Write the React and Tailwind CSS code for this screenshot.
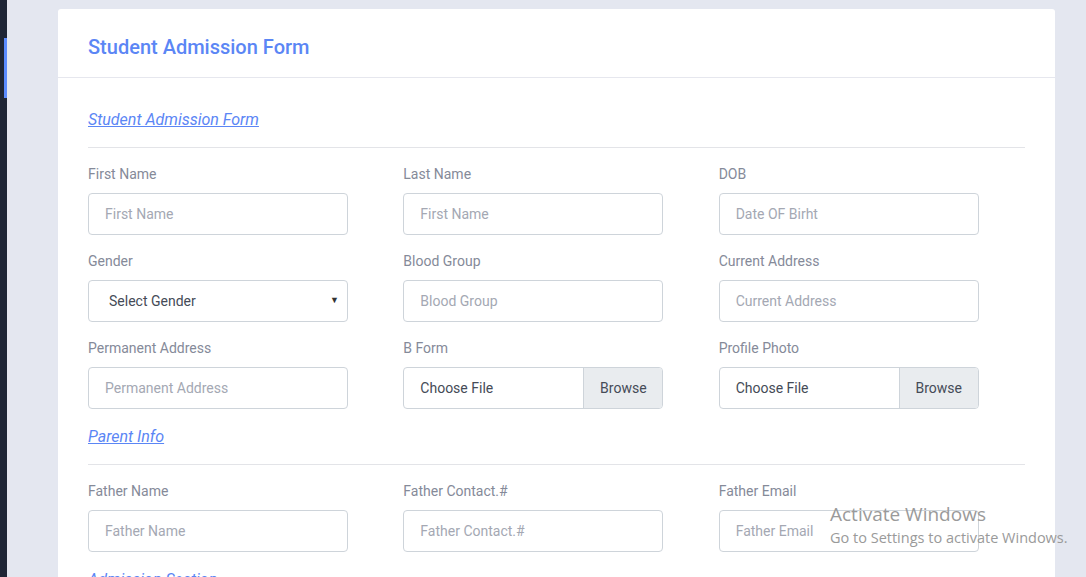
import React from "react";

const Label = ({ children }) => (
  <div className="h-5 text-[14px] leading-5 text-[#858a99] mb-[9px]">{children}</div>
);

const TextInput = ({ placeholder }) => (
  <div className="w-[260px] h-[42px] border border-[#ced4da] rounded-[4px] bg-white flex items-center px-4 text-[14px] text-[#a4a8b3]">
    {placeholder}
  </div>
);

const SelectInput = ({ value }) => (
  <div className="w-[260px] h-[42px] border border-[#ced4da] rounded-[4px] bg-white flex items-center justify-between pl-5 pr-[8px] text-[14px] text-[#454b57]">
    <span>{value}</span>
    <span className="text-[9px] text-[#333]">▼</span>
  </div>
);

const FileInput = () => (
  <div className="w-[260px] h-[42px] border border-[#ced4da] rounded-[4px] bg-white flex overflow-hidden text-[14px] text-[#454b57]">
    <div className="flex-1 flex items-center px-4">Choose File</div>
    <div className="w-[79px] bg-[#e9ecef] border-l border-[#ced4da] flex items-center justify-center">Browse</div>
  </div>
);

const Field = ({ label, children }) => (
  <div>
    <Label>{label}</Label>
    {children}
  </div>
);

const SectionLink = ({ children }) => (
  <div className="h-6 leading-6 text-[16px] italic underline text-[#5b86f5]">{children}</div>
);

export default function App() {
  return (
    <div className="w-[1086px] h-[577px] overflow-hidden bg-[#e4e7f0] flex relative" style={{ fontFamily: "Roboto, 'Liberation Sans', sans-serif" }}>
      <div className="w-[7px] h-full bg-[#1f2636] shrink-0 flex flex-col">
        <div className="h-[38px]" />
        <div className="ml-[4px] w-[3px] h-[60px] bg-[#5b8cff]" />
      </div>
      <div className="pl-[51px] pt-[9px]">
        <div className="w-[997px] bg-white rounded-t-[3px] h-[600px]">
          <div className="h-[69px] border-b border-[#e6e7ee] px-[30px] pt-[28px]">
            <h1 className="text-[20px] font-medium text-[#5b86f5] leading-[20px]">Student Admission Form</h1>
          </div>
          <div className="px-[30px] pt-[30px]">
            <SectionLink>Student Admission Form</SectionLink>
            <div className="mt-[15px] border-t border-[#e3e4e8]" />
            <div className="grid grid-cols-3 gap-x-[9px] gap-y-4 pt-4">
              <Field label="First Name"><TextInput placeholder="First Name" /></Field>
              <Field label="Last Name"><TextInput placeholder="First Name" /></Field>
              <Field label="DOB"><TextInput placeholder="Date OF Birht" /></Field>
              <Field label="Gender"><SelectInput value="Select Gender" /></Field>
              <Field label="Blood Group"><TextInput placeholder="Blood Group" /></Field>
              <Field label="Current Address"><TextInput placeholder="Current Address" /></Field>
              <Field label="Permanent Address"><TextInput placeholder="Permanent Address" /></Field>
              <Field label="B Form"><FileInput /></Field>
              <Field label="Profile Photo"><FileInput /></Field>
            </div>
            <div className="mt-4">
              <SectionLink>Parent Info</SectionLink>
            </div>
            <div className="mt-[15px] border-t border-[#e3e4e8]" />
            <div className="grid grid-cols-3 gap-x-[9px] gap-y-4 pt-4">
              <Field label="Father Name"><TextInput placeholder="Father Name" /></Field>
              <Field label="Father Contact.#"><TextInput placeholder="Father Contact.#" /></Field>
              <Field label="Father Email"><TextInput placeholder="Father Email" /></Field>
            </div>
            <div className="mt-4">
              <SectionLink>Admission Section</SectionLink>
            </div>
          </div>
        </div>
      </div>
      <div className="absolute left-[830px] top-[505px] text-[#9a9a9a] leading-none" style={{ fontFamily: "'Open Sans', 'Noto Sans', sans-serif" }}>
        <div className="text-[19px]">Activate Windows</div>
        <div className="text-[14.5px] mt-[7px]">Go to Settings to activate Windows.</div>
      </div>
    </div>
  );
}
